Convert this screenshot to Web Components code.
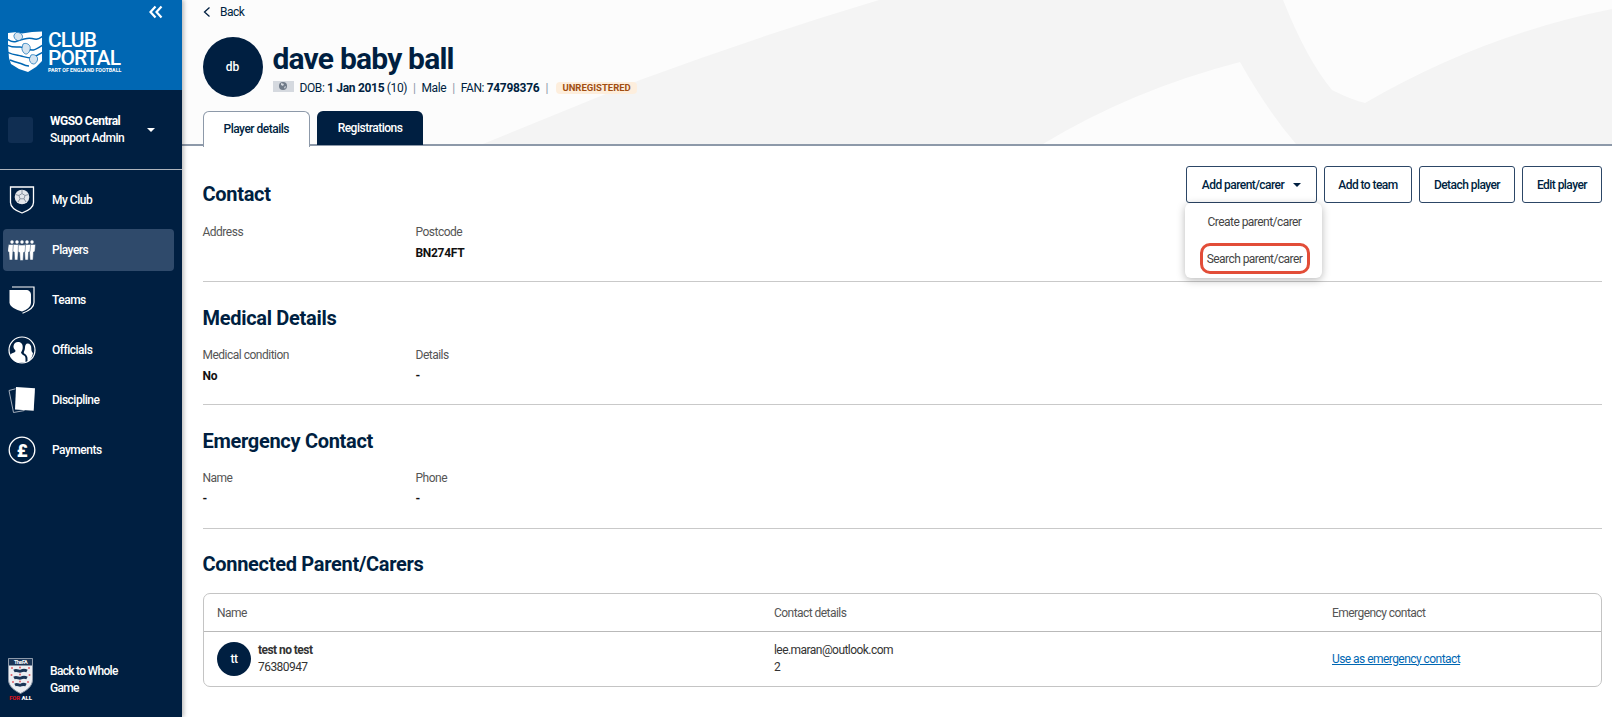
<!DOCTYPE html>
<html lang="en">
<head>
<meta charset="utf-8">
<title>Club Portal</title>
<style>
  html, body { margin: 0; height: 100%; }
  body {
    display: flex;
    height: 717px;
    overflow: hidden;
    font-family: "Roboto", "Liberation Sans", sans-serif;
    color: #001f41;
    background: #fff;
  }
</style>
</head>
<body>
  <app-sidebar>
    <nav-item label="My Club" icon="club"></nav-item>
    <nav-item label="Players" icon="players" active></nav-item>
    <nav-item label="Teams" icon="teams"></nav-item>
    <nav-item label="Officials" icon="officials"></nav-item>
    <nav-item label="Discipline" icon="discipline"></nav-item>
    <nav-item label="Payments" icon="payments"></nav-item>
  </app-sidebar>

  <player-page>
    <player-header slot="header"></player-header>

    <info-section heading="Contact">
      <add-actions slot="actions"></add-actions>
      <info-field label="Address"></info-field>
      <info-field label="Postcode" value="BN274FT"></info-field>
    </info-section>
    <info-section heading="Medical Details">
      <info-field label="Medical condition" value="No"></info-field>
      <info-field label="Details" value="-"></info-field>
    </info-section>
    <info-section heading="Emergency Contact">
      <info-field label="Name" value="-"></info-field>
      <info-field label="Phone" value="-"></info-field>
    </info-section>
    <parent-table></parent-table>
  </player-page>

<script>
// Small helper, every element gets the same open shadow root setup
function render(el, html) {
  el.attachShadow({ mode: 'open' });
  el.shadowRoot.innerHTML = html;
}

// One player in the Players icon
function figure(cx, top, wide) {
  const l = cx - 3.2 - wide, r = cx + 3.2 + wide;
  return `<path d="M${l} ${top}H${r}l-.6 7-1.400.5-.5 8h-3l-.5-8-1.400-.5z"/>`;
}

const ICONS = {
  club: `<svg viewBox="0 0 26 28" width="26" height="28">
      <path d="M1.500 1h23v15.500c0 5.500-6 8.500-11.500 10.500C7.500 25 1.500 22 1.500 16.500z" fill="none" stroke="#fff" stroke-width="1.300"/>
      <circle cx="13" cy="11" r="7.300" fill="#e4e7eb"/>
      <path d="M13 7.500l3 2-1 3.300h-4L10 9.500zM13 4v3.500M16 9.500l3.500-1M15 12.800l2 3.200M11 12.800l-2 3.200M10 9.500l-3.500-1" fill="none" stroke="#8a94a1" stroke-width="1"/>
    </svg>`,
  players: `<svg viewBox="0 0 28 21" width="28" height="21" fill="#fff" stroke="#2f4a6b" stroke-width=".5">
      <g stroke="none"><circle cx="4" cy="2" r="1.700"/><circle cx="9" cy="2" r="1.700"/><circle cx="14" cy="2" r="1.700"/><circle cx="19" cy="2" r="1.700"/><circle cx="24" cy="2" r="1.700"/></g>
      ${figure(3.700, 4.500, 0)}${figure(24.300, 4.500, 0)}${figure(8.800, 4.500, .2)}${figure(19.200, 4.500, .2)}${figure(14, 5, .4)}
    </svg>`,
  teams: `<svg viewBox="0 0 26 28" width="26" height="28">
      <path d="M3 1h22v15.500c0 5.500-6 8.700-11.500 10.800" fill="none" stroke="#fff" stroke-width="1.200"/>
      <path d="M.5 4H17c3 0 5 2 5 5v7.500c0 4.500-4 7-9 9-6-2-12.500-4.500-12.500-9z" fill="#fff"/>
    </svg>`,
  officials: `<svg viewBox="0 0 28 28" width="28" height="28">
      <circle cx="14" cy="14" r="13" fill="none" stroke="#fff" stroke-width="1.200"/>
      <path d="M10 6c3.500 0 5 2.500 4.700 6-.2 2-1.200 3.500-1.700 4.500.5 1.500 1.500 2.300 3 3 1 .5 1.500 1.500 1.500 3.500v3.500H9a13 13 0 0 1-7-7.500c1-1.500 3-2 5-3 .5-.5.5-1 .3-1.700C6 13 5.300 11.500 5.500 10 6 7.500 7.500 6 10 6z" fill="#fff"/>
      <path d="M19.500 7.500c2.500 0 4 2 3.800 5 0 2 .5 3.500 1.700 4.500a13 13 0 0 1-5.500 9v-3.500c0-2-1-3.500-2.500-4.500-1-.5-1.500-1-1-2.500.5-1 1-2.500 1-4 0-2 1-4 2.500-4z" fill="#fff"/>
    </svg>`,
  discipline: `<svg viewBox="0 0 28 28" width="28" height="28">
      <path d="M7.500 2.800L1 4.500 5.500 26.500 16.500 24.500" fill="none" stroke="#b4bcc7" stroke-width=".9"/>
      <path d="M8 1l19 1.300-1.300 22.500L7 23.500z" fill="#fff"/>
    </svg>`,
  payments: `<svg viewBox="0 0 28 28" width="28" height="28">
      <circle cx="14" cy="14" r="12.800" fill="none" stroke="#fff" stroke-width="1.300"/>
      <text x="14" y="20.500" text-anchor="middle" font-family="Roboto, sans-serif" font-weight="900" font-size="18" fill="#fff">£</text>
    </svg>`
};

class NavItem extends HTMLElement {
  constructor() {
    super();
    render(this, `
      <style>
        :host { display: block; height: 42px; margin: 0 8px 8px 3px; }
        .row {
          height: 100%;
          display: flex;
          align-items: center;
          gap: 16px;
          padding-left: 5px;
          border-radius: 4px;
          font-size: 12px;
          font-weight: 500;
          letter-spacing: -.5px;
          color: #fff;
        }
        :host([active]) .row { background: #2f4a6b; }
        .icon { width: 28px; height: 28px; display: flex; align-items: center; justify-content: center; }
      </style>
      <div class="row">
        <span class="icon">${ICONS[this.getAttribute('icon')]}</span>
        <span>${this.getAttribute('label')}</span>
      </div>
    `);
  }
}
customElements.define('nav-item', NavItem);

class AppSidebar extends HTMLElement {
  constructor() {
    super();
    render(this, `
      <style>
        :host {
          display: flex;
          flex-direction: column;
          flex: 0 0 182px;
          height: 717px;
          background: #001f41;
          color: #fff;
          box-shadow: 2px 0 4px rgba(0, 0, 0, .25);
          position: relative;
          z-index: 2;
        }
        .brand {
          height: 90px;
          box-sizing: border-box;
          background: #0067b3;
          position: relative;
          padding: 31px 0 0 8px;
          display: flex;
          gap: 6px;
        }
        .collapse { position: absolute; left: 148px; top: 5px; }
        .wordmark { width: 72px; }
        .wordmark b { display: block; font-size: 21px; line-height: 18px; font-weight: 500; letter-spacing: -.9px; }
        .wordmark small { display: block; font-size: 5.300px; font-weight: 700; line-height: 7px; white-space: nowrap; }
        .account {
          height: 80px;
          box-sizing: border-box;
          display: flex;
          align-items: center;
          padding: 0 0 0 8px;
          border-bottom: 1px solid #aeb4bc;
        }
        .square { width: 25px; height: 26px; border-radius: 3px; background: #102e52; }
        .who { margin-left: 17px; font-size: 12px; line-height: 17px; letter-spacing: -.5px; font-weight: 500; width: 97px; }
        .who b { font-weight: 700; display: block; }
        .caret { width: 0; height: 0; border: 4px solid transparent; border-top: 4.500px solid #fff; border-bottom: 0; }
        nav { padding-top: 9px; flex: 1; }
        .whole {
          display: flex;
          align-items: center;
          gap: 17px;
          padding: 0 0 15px 8px;
          font-size: 12px;
          font-weight: 500;
          line-height: 17px;
          letter-spacing: -.7px;
        }
        .crest { width: 25px; }
        .crest svg { display: block; }
        .forall { font-size: 6px; font-weight: 900; text-align: center; line-height: 8px; color: #fff; white-space: nowrap; letter-spacing: -.1px; }
        .forall i { color: #d4141f; font-style: normal; }
      </style>
      <div class="brand">
        <svg class="collapse" width="16" height="14" viewBox="0 0 16 14" fill="none" stroke="#fff" stroke-width="2.200">
          <path d="M7.500 1.500L2.500 7l5 5.500M13.500 1.500L8.500 7l5 5.500"/>
        </svg>
        <svg width="34" height="41" viewBox="0 0 34 41">
          <path d="M0 2l9-1 5 1.500L24 1l10-.5V30l-6 6-8 5-9-3-8-5-2-6L0 14z" fill="#fff"/>
          <g fill="none" stroke="#0067b3" stroke-width="1.500">
            <path d="M-1 8c4 3 7 3 9 2.500S18 6 24 7.500 30 8 35 5"/>
            <path d="M-1 14c6 3 9 2 13 2s8 3 12 3 7-3 11-5"/>
            <path d="M-1 21c6 3 10 3 14 4s7 2 10 2 8-4 12-6"/>
            <path d="M2 29c5 2 9 3 12 4 2 1 5 2 7 2"/>
          </g>
          <g fill="#d5e4f0" stroke="#0067b3" stroke-width=".7">
            <path d="M8 1.500c3-.5 6 1 6.500 3.500S12 10 9.500 9.500 5.500 6 6 4z"/>
            <path d="M15 13c3-1.500 6 0 7 2.500s-1 7-3.500 7.500-5-4-4.500-6z"/>
            <path d="M23 24c3-1 6 .5 6.500 3s-1.500 6-4 6-4.500-3-4-5.500z"/>
          </g>
        </svg>
        <div class="wordmark"><b>CLUB PORTAL</b><small>PART OF ENGLAND FOOTBALL</small></div>
      </div>
      <div class="account">
        <div class="square"></div>
        <div class="who"><b>WGSO Central</b>Support Admin</div>
        <div class="caret"></div>
      </div>
      <nav><slot></slot></nav>
      <div class="whole">
        <div class="crest">
          <svg width="25" height="36" viewBox="0 0 25 36">
            <path d="M.5.500h24v21c0 7-6 11-12 14C6.500 32.500.5 28.500.5 21.500z" fill="#eceef2" stroke="#8d99a9"/>
            <rect x="1" y="1" width="23" height="6.500" fill="#1b3556"/>
            <text x="12.500" y="6" text-anchor="middle" font-size="5.500" font-weight="700" fill="#fff" font-family="Roboto, sans-serif">The FA</text>
            <g fill="none" stroke="#1b3556" stroke-width="3">
              <path d="M6 13c3-1.500 5 1 7 0s4-1 6 0"/>
              <path d="M6 20c3-1.500 5 1 7 0s4-1 6 0"/>
              <path d="M7 27c3-1.500 4 1 6 0s3-1 5 0"/>
            </g>
            <g fill="#e0606a">
              <circle cx="4" cy="10" r="1"/><circle cx="21" cy="10" r="1"/><circle cx="12" cy="9.500" r="1"/>
              <circle cx="3.500" cy="17" r="1"/><circle cx="21.500" cy="17" r="1"/>
              <circle cx="12" cy="16.500" r="1"/><circle cx="12" cy="23.500" r="1"/>
              <circle cx="5" cy="24" r="1"/><circle cx="20" cy="24" r="1"/>
            </g>
          </svg>
          <div class="forall"><i>FOR</i> ALL</div>
        </div>
        <div>Back to Whole<br>Game</div>
      </div>
    `);
  }
}
customElements.define('app-sidebar', AppSidebar);

class PlayerPage extends HTMLElement {
  constructor() {
    super();
    render(this, `
      <style>
        :host { display: block; flex: 1; min-width: 0; }
        main { padding: 0 10px 0 20.500px; }
      </style>
      <slot name="header"></slot>
      <main><slot></slot></main>
    `);
  }
}
customElements.define('player-page', PlayerPage);

class PlayerHeader extends HTMLElement {
  constructor() {
    super();
    render(this, `
      <style>
        :host {
          display: block;
          height: 146px;
          box-sizing: border-box;
          position: relative;
          background: #fcfcfc;
          border-bottom: 2px solid #8d99a9;
          padding-left: 20.500px;
        }
        .bg { position: absolute; left: 0; top: 0; }
        .content { position: relative; }
        .back { height: 24px; display: flex; align-items: center; gap: 7.500px; font-size: 12px; letter-spacing: -.5px; }
        .who { display: flex; align-items: flex-start; gap: 10px; margin-top: 13px; height: 60px; }
        .avatar {
          width: 60px; height: 60px; border-radius: 50%;
          background: #001f41; color: #fff;
          display: flex; align-items: center; justify-content: center;
          font-size: 12px; font-weight: 500;
        }
        h1 { margin: 4.500px 0 0; font-size: 30px; line-height: 33px; font-weight: 700; letter-spacing: -.8px; }
        .meta { display: flex; align-items: center; font-size: 12px; letter-spacing: -.4px; height: 18px; margin-top: 4px; }
        .flag { width: 21px; height: 11px; background: #d5d9df; margin-right: 6px; margin-top: -3px; display: flex; justify-content: center; }
        .meta b { font-weight: 700; letter-spacing: -.3px; }
        .sep { color: #8d99a9; margin: 0 6px; }
        .pill { background: #fdeedd; color: #a14e12; font-size: 9.500px; font-weight: 700; letter-spacing: 0; padding: 0 6.500px; border-radius: 4px; line-height: 12px; margin-left: 2px; }
        .tabs { display: flex; gap: 7px; margin-top: 14px; height: 34px; }
        .tab {
          height: 34px; box-sizing: border-box;
          border-radius: 6px 6px 0 0;
          display: flex; align-items: center; justify-content: center;
          font-size: 12px; letter-spacing: -.5px;
        }
        .on { width: 107.500px; background: #fff; border: 1px solid #8d99a9; border-bottom: 0; height: 36px; font-weight: 500; padding-bottom: 2px; }
        .off { width: 106px; background: #001f41; color: #fff; font-weight: 500; }
      </style>
      <svg class="bg" width="1430" height="144" viewBox="0 0 1430 144" fill="#f4f4f4">
        <path d="M301 144L458 80 Q580 35 697 0H1101Q1125 60 1150 90 Q1170 100 1183 103 Q1300 35 1430 9V144H1114Q1085 110 1058 62 Q950 90 861 144z"/>
      </svg>
      <div class="content">
        <div class="back">
          <svg width="10" height="12" viewBox="0 0 10 12" fill="none" stroke="#001f41" stroke-width="1.300"><path d="M6.500 1.500L1.500 6l5 4.500"/></svg>
          <span>Back</span>
        </div>
        <div class="who">
          <div class="avatar">db</div>
          <div>
            <h1>dave baby ball</h1>
            <div class="meta">
              <span class="flag"><svg width="10" height="10" viewBox="0 0 10 10"><circle cx="5" cy="5" r="4" fill="#6f7a88"/><path d="M3 2l3 1-1 2-2-1zM6 6l2-1-1 3z" fill="#d5d9df"/></svg></span>
              <span>DOB: <b>1 Jan 2015</b> (10)</span><span class="sep">|</span>
              <span>Male</span><span class="sep">|</span>
              <span>FAN: <b>74798376</b></span><span class="sep">|</span>
              <span class="pill">UNREGISTERED</span>
            </div>
          </div>
        </div>
        <div class="tabs">
          <div class="tab on">Player details</div>
          <div class="tab off">Registrations</div>
        </div>
      </div>
    `);
  }
}
customElements.define('player-header', PlayerHeader);

class InfoSection extends HTMLElement {
  constructor() {
    super();
    render(this, `
      <style>
        :host { display: block; border-bottom: 1px solid #c9c9c9; padding: 24px 0 20.500px; }
        .head { display: flex; justify-content: space-between; align-items: flex-start; }
        h2 { margin: 0; font-size: 20px; line-height: 24px; font-weight: 700; letter-spacing: -.3px; }
        .fields { display: grid; grid-template-columns: 213px 213px; margin-top: 17px; }
        :host([heading="Contact"]) { padding: 20px 0 19.500px; }
        :host([heading="Contact"]) h2 { margin-top: 16px; }
        :host([heading="Contact"]) .fields { margin-top: 18px; }
      </style>
      <div class="head"><h2>${this.getAttribute('heading')}</h2><slot name="actions"></slot></div>
      <div class="fields"><slot></slot></div>
    `);
  }
}
customElements.define('info-section', InfoSection);

class InfoField extends HTMLElement {
  constructor() {
    super();
    const value = this.getAttribute('value') || '&nbsp;';
    render(this, `
      <style>
        :host { display: block; font-size: 12px; letter-spacing: -.5px; line-height: 16px; }
        .label { color: #555; margin-bottom: 5px; }
        .value { color: #111; font-weight: 700; letter-spacing: -.3px; }
      </style>
      <div class="label">${this.getAttribute('label')}</div>
      <div class="value">${value}</div>
    `);
  }
}
customElements.define('info-field', InfoField);

class AddActions extends HTMLElement {
  constructor() {
    super();
    render(this, `
      <style>
        :host { display: flex; gap: 7px; position: relative; }
        button {
          height: 37px; box-sizing: border-box;
          background: #fff; color: #001f41;
          border: 1px solid #2c4666; border-radius: 3px;
          font: 500 12px "Roboto", sans-serif; letter-spacing: -.55px;
          padding: 0; display: flex; align-items: center; justify-content: center;
        }
        .caret { width: 0; height: 0; border: 4px solid transparent; border-top: 4px solid #001f41; border-bottom: 0; margin-left: 9px; }
        .menu {
          position: absolute; left: 0; top: 37px;
          width: 137px; height: 75px;
          background: #fff; border-radius: 6px;
          box-shadow: 0 2px 8px rgba(0, 0, 0, .28);
          font-size: 12px; letter-spacing: -.55px; color: #444;
          display: flex; flex-direction: column; align-items: center;
        }
        .menu div { height: 30px; display: flex; align-items: center; justify-content: center; width: 110px; box-sizing: border-box; margin-left: 2px; }
        .menu div:first-child { margin-top: 4px; margin-bottom: 6px; }
        .menu .hit { height: 31px; border: 3px solid #e24d38; border-radius: 10px; }
      </style>
      <button style="width:131px;margin-left:1px">Add parent/carer<span class="caret"></span></button>
      <button style="width:88px">Add to team</button>
      <button style="width:96px">Detach player</button>
      <button style="width:80px">Edit player</button>
      <div class="menu">
        <div>Create parent/carer</div>
        <div class="hit">Search parent/carer</div>
      </div>
    `);
  }
}
customElements.define('add-actions', AddActions);

class ParentTable extends HTMLElement {
  constructor() {
    super();
    render(this, `
      <style>
        :host { display: block; padding-top: 23.500px; font-size: 12px; letter-spacing: -.55px; }
        h2 { margin: 0 0 17px; font-size: 20px; line-height: 24px; font-weight: 700; letter-spacing: -.3px; }
        .table { border: 1px solid #c4c4c4; border-radius: 7px; }
        .row { display: grid; grid-template-columns: 557px 558px 1fr; padding: 0 13.500px; align-items: center; }
        .top { height: 37px; border-bottom: 1px solid #b9b9b9; color: #555; }
        .body { height: 54px; color: #333; line-height: 17px; }
        .person { display: flex; align-items: center; gap: 7px; }
        .avatar { width: 34px; height: 34px; border-radius: 50%; background: #001f41; color: #fff; display: flex; align-items: center; justify-content: center; font-weight: 500; }
        b { font-weight: 700; }
        a { color: #0067b3; text-decoration: underline; }
      </style>
      <h2>Connected Parent/Carers</h2>
      <div class="table">
        <div class="row top"><span>Name</span><span>Contact details</span><span>Emergency contact</span></div>
        <div class="row body">
          <div class="person"><div class="avatar">tt</div><div><b>test no test</b><br>76380947</div></div>
          <div>lee.maran@outlook.com<br>2</div>
          <div><a href="#">Use as emergency contact</a></div>
        </div>
      </div>
    `);
  }
}
customElements.define('parent-table', ParentTable);
</script>
</body>
</html>
